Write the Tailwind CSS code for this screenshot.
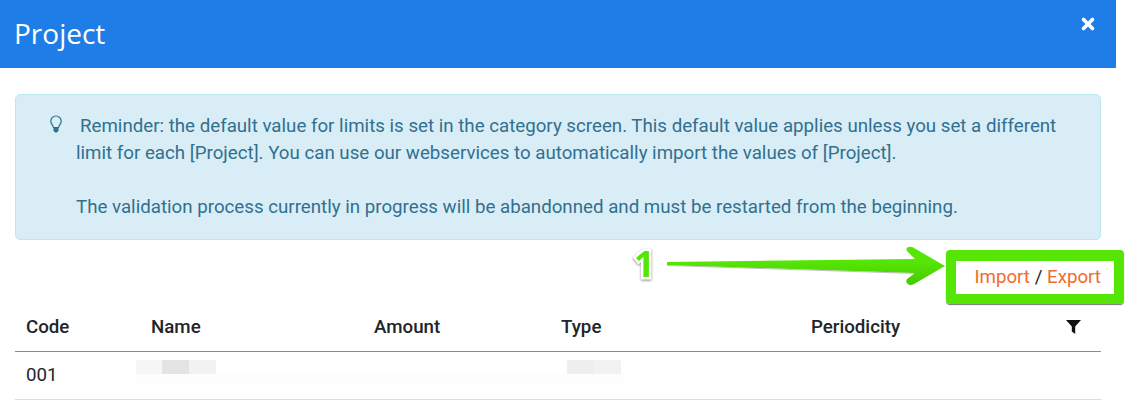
<!DOCTYPE html>
<html lang="en">
<head>
    <meta charset="UTF-8">
    <title>Project</title>
    <script src="https://cdn.jsdelivr.net/npm/@tailwindcss/browser@4"></script>
</head>
<body class="bg-white h-[401px] w-[1129px] overflow-hidden font-['Roboto',sans-serif] text-[#212529]">
    <div class="w-[1116px]">
        <!-- Header -->
        <div class="h-[68px] bg-[#1e7de6] text-white flex justify-between pl-[14px] pr-[20px]">
            <h1 class="font-['Open_Sans',sans-serif] text-[28px] leading-[36px] pt-[15px]">Project</h1>
            <svg class="mt-[16px]" width="16" height="16" viewBox="0 0 16 16"><path d="M3.5 3.5 L12.5 12.5 M12.5 3.5 L3.5 12.5" stroke="#fff" stroke-width="3.6" stroke-linecap="round"/></svg>
        </div>

        <div class="px-[15px] pt-[26px]">
            <!-- Reminder -->
            <div class="relative h-[146px] bg-[#d9edf7] border border-[#bce8f1] rounded-[5px] text-[#31708f] text-[18.72px] leading-[27px] pl-[60px] pr-[20px] pt-[18px] whitespace-nowrap">
                <svg class="absolute left-[33px] top-[20px]" width="14" height="18" viewBox="0 0 14 18" fill="none"><path d="M7 1a5.2 5.2 0 0 0-5.2 5.2c0 2.5 2 3.6 2.7 6.3h5C10.200 9.800 12.200 8.700 12.200 6.200A5.200 5.200 0 0 0 7 1z" stroke="#31708f" stroke-width="1.200"/><path d="M4.500 12.500h5v3L8 17.500H6l-1.500-2z" fill="#31708f"/></svg>
                <div class="pl-[4px]">Reminder: the default value for limits is set in the category screen. This default value applies unless you set a different</div>
                <div>limit for each [Project]. You can use our webservices to automatically import the values of [Project].</div>
                <div class="mt-[27px]">The validation process currently in progress will be abandonned and must be restarted from the beginning.</div>
            </div>

            <!-- Actions -->
            <div class="h-[57px] flex justify-end items-center text-[18.72px]">
                <span class="text-[#f26b2e] mt-[17px]">Import <span class="text-[#212529]">/</span> Export</span>
            </div>

            <!-- Table -->
            <div class="grid grid-cols-[125px_223px_187px_250px_1fr] font-medium h-[55px] items-center border-b border-[#e2703a] text-[18.72px] px-[11px]">
                <span class="mt-[7px]">Code</span><span class="mt-[7px]">Name</span><span class="mt-[7px]">Amount</span><span class="mt-[7px]">Type</span>
                <span class="flex justify-between items-center pr-[9px] mt-[7px]">Periodicity
                    <svg width="15" height="14" viewBox="0 0 15 14"><path d="M0 0h15L9.200 6.500V14L5.800 11.500V6.500z" fill="#111"/></svg>
                </span>
            </div>
            <div class="relative h-[48px] flex items-center border-b border-[#ddd] text-[18.72px] px-[11px]">
                <span>001</span>
                <div class="absolute left-[121px] top-[8px] w-[488px]">
                    <div class="flex h-[14px]"><div class="w-[26px] bg-[#f6f6f5]"></div><div class="w-[27px] bg-[#e4e4e4]"></div><div class="w-[27px] bg-[#f2f2f2]"></div></div>
                    <div class="h-[11px] bg-[#fdfdfd]"></div>
                </div>
                <div class="absolute left-[552px] top-[8px] flex h-[14px]"><div class="w-[27px] bg-[#eeeeee]"></div><div class="w-[27px] bg-[#f2f2f2]"></div></div>
            </div>
        </div>
    </div>

    <!-- Annotation -->
    <div class="absolute left-[946px] top-[250px] w-[178px] h-[54px] border-[10px] border-t-[11px] border-[#55e605] rounded-[4px] shadow-[0_1px_1px_#777]"></div>
    <svg class="absolute left-[660px] top-[240px]" width="290" height="50" viewBox="0 0 290 50">
        <defs><linearGradient id="arrowFill" x1="0" y1="0" x2="0" y2="1"><stop offset="0.4" stop-color="#55e605"/><stop offset="1" stop-color="#46c800"/></linearGradient></defs>
        <path d="M7 22 L255 19 L247 11 Q245 7 249 7 Q251 6 254 8 L285 26 L254 44 Q250 46 248 44 Q245 42 247 39 L255 33 L7 25 Z" fill="url(#arrowFill)"/>
        <path d="M7 25.500 L255 33.500" stroke="#999" stroke-width="1" opacity="0.600"/>
    </svg>
    <span class="absolute left-[634px] top-[241px] text-[36px] leading-[46px] font-bold text-[#55e605] font-['Noto_Sans',sans-serif] [-webkit-text-stroke:5px_white] [paint-order:stroke] drop-shadow-[0_1px_1px_#888]">1</span>
</body>
</html>
